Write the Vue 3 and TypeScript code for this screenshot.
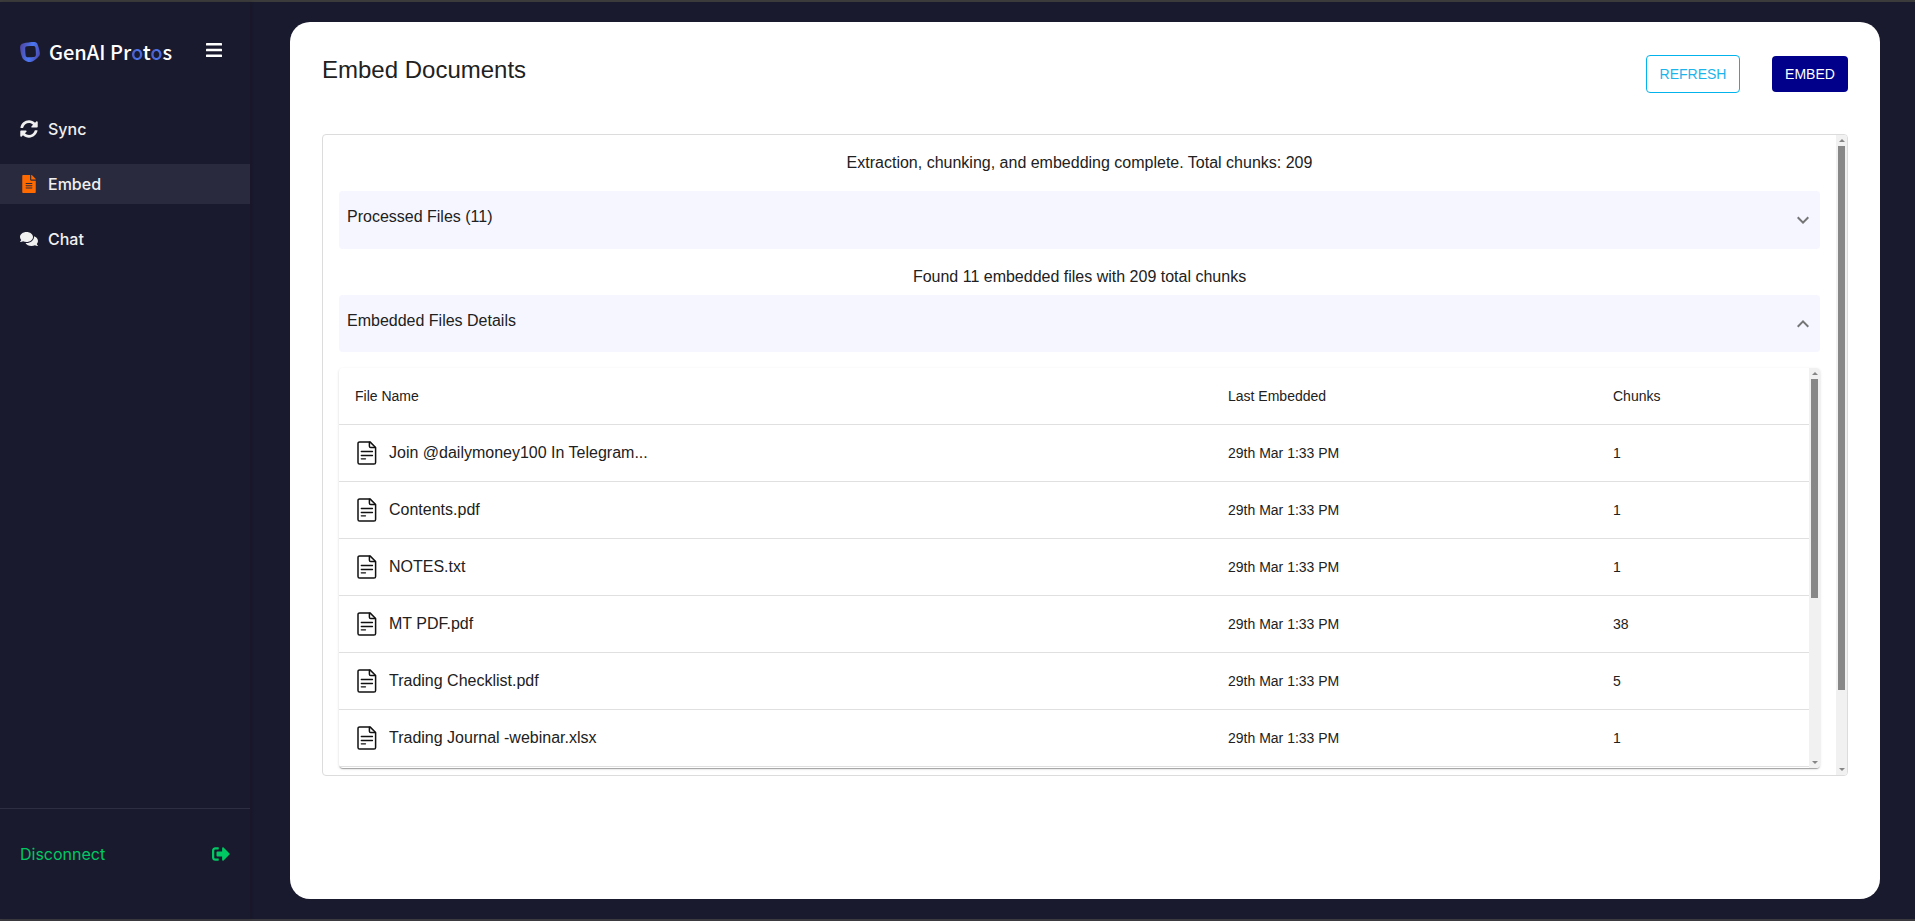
<script setup lang="ts">
import { ref } from 'vue'

interface EmbeddedFile {
  name: string
  embeddedAt: string
  chunks: number
}

const files: EmbeddedFile[] = [
  { name: 'Join @dailymoney100 In Telegram...', embeddedAt: '29th Mar 1:33 PM', chunks: 1 },
  { name: 'Contents.pdf', embeddedAt: '29th Mar 1:33 PM', chunks: 1 },
  { name: 'NOTES.txt', embeddedAt: '29th Mar 1:33 PM', chunks: 1 },
  { name: 'MT PDF.pdf', embeddedAt: '29th Mar 1:33 PM', chunks: 38 },
  { name: 'Trading Checklist.pdf', embeddedAt: '29th Mar 1:33 PM', chunks: 5 },
  { name: 'Trading Journal -webinar.xlsx', embeddedAt: '29th Mar 1:33 PM', chunks: 1 },
]

const detailsOpen = ref(true)
</script>

<template>
  <div class="page">
    <aside class="sidebar">
      <div class="brand">
        <svg class="brand-mark" viewBox="0 0 20 20" aria-hidden="true">
          <defs>
            <linearGradient id="mark" x1="0" y1="0.3" x2="1" y2="0.6">
              <stop offset="0" stop-color="#4f47a6" />
              <stop offset="0.55" stop-color="#4a78f2" />
              <stop offset="1" stop-color="#4d49b0" />
            </linearGradient>
          </defs>
          <path
            fill="url(#mark)"
            fill-rule="evenodd"
            d="M3 1.600C6.800.5 11.300 0 14.600.1c1.500.1 2.400.9 2.900 2.200.9 2.300 1.900 5.200 2.300 8.200.2 1.600-.1 2.900-1.200 4.100-1.600 1.900-3.900 3.700-6.200 4.900-1.700.8-3.600.6-5.400-.1-2.400-.9-4.100-2-4.900-4.100C1 12.500.3 9 .1 6 0 3.600.9 2.200 3 1.600ZM7 4.200C5.700 4.300 5.200 5 5.200 6.400c0 2.500.1 4.600.4 6.900.2 1.400 1 2 2.500 2 2 0 3.900-.1 5.800-.3 1.400-.2 2-1 2-2.400 0-2.300-.1-4.500-.4-6.700-.2-1.300-.9-1.900-2.300-1.900-2.100 0-4.200.1-6.200.2Z"
          />
        </svg>
        <span class="brand-name">GenAI Pr<span class="accent">o</span>t<span class="accent">o</span>s</span>
        <button class="menu" type="button" aria-label="Toggle menu">
          <svg viewBox="0 0 16 14" aria-hidden="true">
            <g fill="#fff">
              <rect width="16" height="2.600" rx="0.600" />
              <rect y="5.700" width="16" height="2.600" rx="0.600" />
              <rect y="11.400" width="16" height="2.600" rx="0.600" />
            </g>
          </svg>
        </button>
      </div>

      <nav class="nav">
        <a class="nav-item" href="#sync">
          <svg viewBox="0 0 512 512" aria-hidden="true">
            <path
              fill="currentColor"
              d="M370.720 133.280C339.458 104.008 298.888 87.962 255.848 88c-77.458.068-144.328 53.178-162.791 126.850-1.344 5.363-6.122 9.150-11.651 9.150H24.103c-7.498 0-13.194-6.807-11.807-14.176C33.933 94.924 134.813 8 256 8c66.448 0 126.791 26.136 171.315 68.685L463.030 40.970C478.149 25.851 504 36.559 504 57.941V192c0 13.255-10.745 24-24 24H345.941c-21.382 0-32.090-25.851-16.971-40.971l41.750-41.749zM32 296h134.059c21.382 0 32.090 25.851 16.971 40.971l-41.750 41.750c31.262 29.273 71.835 45.319 114.876 45.280 77.418-.070 144.315-53.144 162.787-126.849 1.344-5.363 6.122-9.150 11.651-9.150h57.304c7.498 0 13.194 6.807 11.807 14.176C478.067 417.076 377.187 504 256 504c-66.448 0-126.791-26.136-171.315-68.685L48.970 471.030C33.851 486.149 8 475.441 8 454.059V320c0-13.255 10.745-24 24-24z"
            />
          </svg>
          Sync
        </a>
        <a class="nav-item active" href="#embed" aria-current="page">
          <svg viewBox="-64 0 512 512" aria-hidden="true">
            <path
              fill="#ff6a00"
              d="M224 136V0H24C10.700 0 0 10.700 0 24v464c0 13.300 10.700 24 24 24h336c13.300 0 24-10.700 24-24V160H248c-13.200 0-24-10.800-24-24zm64 236c0 6.600-5.400 12-12 12H108c-6.600 0-12-5.400-12-12v-8c0-6.600 5.400-12 12-12h168c6.600 0 12 5.400 12 12v8zm0-64c0 6.600-5.400 12-12 12H108c-6.600 0-12-5.400-12-12v-8c0-6.600 5.400-12 12-12h168c6.600 0 12 5.400 12 12v8zm0-72v8c0 6.600-5.400 12-12 12H108c-6.600 0-12-5.400-12-12v-8c0-6.600 5.400-12 12-12h168c6.600 0 12 5.400 12 12zm96-114.100v6.100H256V0h6.100c6.400 0 12.500 2.500 17 7l97.900 98c4.500 4.500 7 10.600 7 16.900z"
            />
          </svg>
          Embed
        </a>
        <a class="nav-item" href="#chat">
          <svg viewBox="0 0 576 512" aria-hidden="true">
            <path
              fill="currentColor"
              d="M416 192c0-88.400-93.100-160-208-160S0 103.600 0 192c0 34.300 14.100 65.900 38 92-13.400 30.200-35.500 54.200-35.800 54.500-2.200 2.300-2.800 5.700-1.500 8.700S4.800 352 8 352c36.600 0 66.900-12.300 88.700-25 32.200 15.700 70.300 25 111.300 25 114.900 0 208-71.600 208-160zm122 220c23.900-26 38-57.700 38-92 0-66.900-53.500-124.200-129.300-148.100.9 6.600 1.300 13.300 1.300 20.100 0 105.900-107.700 192-240 192-10.800 0-21.300-.8-31.700-1.900C207.800 439.600 281.800 480 368 480c41 0 79.100-9.200 111.300-25 21.800 12.700 52.100 25 88.700 25 3.200 0 6.100-1.900 7.300-4.800 1.300-2.900.7-6.300-1.500-8.700-.3-.3-22.400-24.200-35.800-54.500z"
            />
          </svg>
          Chat
        </a>
      </nav>

      <button class="disconnect" type="button">
        Disconnect
        <svg viewBox="0 0 512 512" aria-hidden="true">
          <path
            fill="currentColor"
            d="M497 273L329 441c-15 15-41 4.500-41-17v-96H152c-13.300 0-24-10.700-24-24v-96c0-13.300 10.700-24 24-24h136V88c0-21.400 25.900-32 41-17l168 168c9.300 9.400 9.300 24.600 0 34zM192 436v-40c0-6.600-5.400-12-12-12H96c-17.700 0-32-14.300-32-32V160c0-17.700 14.300-32 32-32h84c6.600 0 12-5.400 12-12V76c0-6.600-5.400-12-12-12H96c-53 0-96 43-96 96v192c0 53 43 96 96 96h84c6.600 0 12-5.400 12-12z"
          />
        </svg>
      </button>
    </aside>

    <main class="main">
      <section class="card">
        <header class="card-head">
          <h1>Embed Documents</h1>
          <div class="actions">
            <button class="btn outlined" type="button">REFRESH</button>
            <button class="btn filled" type="button">EMBED</button>
          </div>
        </header>

        <div class="panel">
          <div class="panel-body">
            <p class="status">Extraction, chunking, and embedding complete. Total chunks: 209</p>
            <button class="accordion" type="button" aria-expanded="false">
              <span>Processed Files (11)</span>
              <svg viewBox="0 0 24 24" aria-hidden="true">
                <path fill="currentColor" d="M16.590 8.590 12 13.170 7.410 8.590 6 10l6 6 6-6z" />
              </svg>
            </button>
            <p class="status found">Found 11 embedded files with 209 total chunks</p>
            <button
              class="accordion"
              type="button"
              :aria-expanded="detailsOpen"
              @click="detailsOpen = !detailsOpen"
            >
              <span>Embedded Files Details</span>
              <svg :class="{ flipped: detailsOpen }" viewBox="0 0 24 24" aria-hidden="true">
                <path fill="currentColor" d="M16.590 8.590 12 13.170 7.410 8.590 6 10l6 6 6-6z" />
              </svg>
            </button>

            <div v-if="detailsOpen" class="table-box">
              <table class="files">
                <thead>
                  <tr>
                    <th class="col-name" scope="col">File Name</th>
                    <th class="col-date" scope="col">Last Embedded</th>
                    <th class="col-chunks" scope="col">Chunks</th>
                  </tr>
                </thead>
                <tbody>
                  <tr v-for="file in files" :key="file.name">
                    <td>
                      <span class="file">
                        <svg viewBox="0 0 20 24" aria-hidden="true">
                          <g fill="none" stroke="#111" stroke-linejoin="round" stroke-linecap="round">
                            <path
                              stroke-width="1.500"
                              d="M2.600.9H13l5.600 5.600v15a1.600 1.600 0 0 1-1.600 1.600H2.600A1.600 1.600 0 0 1 1 21.500v-19A1.600 1.600 0 0 1 2.600.9z"
                            />
                            <path stroke-width="1.500" d="M12.400 1.200v4a1.400 1.400 0 0 0 1.400 1.400h4.400" />
                            <path stroke-width="1.300" d="M4.300 10.500h11.200M4.300 14.500h11.200M4.300 17.800h4.200" />
                          </g>
                        </svg>
                        {{ file.name }}
                      </span>
                    </td>
                    <td>{{ file.embeddedAt }}</td>
                    <td>{{ file.chunks }}</td>
                  </tr>
                </tbody>
              </table>
              <div class="scrollbar inner" aria-hidden="true">
                <i class="arrow up"></i>
                <span class="track"><i class="thumb"></i></span>
                <i class="arrow down"></i>
              </div>
            </div>
          </div>
          <div class="scrollbar outer" aria-hidden="true">
            <i class="arrow up"></i>
            <span class="track"><i class="thumb"></i></span>
            <i class="arrow down"></i>
          </div>
        </div>
      </section>
    </main>
  </div>
</template>

<style scoped>
.page {
  display: flex;
  box-sizing: border-box;
  min-height: 100vh;
  border-top: 2px solid #3b3b3b;
  border-bottom: 2px solid #3b3b3f;
  background: #1a1a2e;
  color: #212121;
  font-family: "Liberation Sans", Arial, sans-serif;
  font-size: 16px;
  line-height: 24px;
}

button {
  font: inherit;
  cursor: pointer;
}

.sidebar {
  display: flex;
  flex: none;
  flex-direction: column;
  width: 250px;
  box-shadow: 2px 0 2px rgba(0, 0, 0, 0.12);
  font-family: Inter, sans-serif;
}

.brand {
  display: flex;
  align-items: center;
  height: 32px;
  padding: 34px 28px 0 20px;
}

.brand-mark {
  width: 20px;
  height: 20px;
  margin-right: 9px;
}

.brand-name {
  color: #fff;
  font-family: "Noto Sans CJK SC", "Noto Sans", sans-serif;
  font-size: 20px;
  font-weight: 500;
  line-height: 32px;
  white-space: nowrap;
}

.accent {
  background: linear-gradient(100deg, #4f47a6, #4a78f2 60%, #4d49b0);
  background-clip: text;
  color: transparent;
}

.menu {
  display: flex;
  margin-left: auto;
  padding: 0 0 4px;
  border: 0;
  background: none;
}

.menu svg {
  width: 16px;
  height: 14px;
}

.nav {
  display: flex;
  flex-direction: column;
  gap: 15px;
  margin-top: 41px;
}

.nav-item {
  display: flex;
  align-items: center;
  gap: 10px;
  height: 40px;
  padding: 0 20px;
  color: #f0f0f0;
  font-weight: 500;
  text-decoration: none;
}

.nav-item.active {
  background: #2a2a3e;
}

.nav-item svg,
.disconnect svg {
  width: 18px;
  height: 18px;
}

.disconnect {
  display: flex;
  align-items: center;
  justify-content: space-between;
  height: 111px;
  margin-top: auto;
  padding: 0 20px 20px;
  border: 0;
  border-top: 1px solid #2e2e42;
  background: none;
  color: #00c964;
}

.main {
  display: flex;
  flex: 1;
  min-width: 0;
  padding: 20px 35px 20px 40px;
}

.card {
  flex: 1;
  min-width: 0;
  padding: 32px;
  border-radius: 20px;
  background: #fff;
}

.card-head {
  display: flex;
  align-items: flex-start;
  justify-content: space-between;
  height: 40px;
}

h1 {
  margin: 0;
  font-size: 24px;
  font-weight: 400;
  line-height: 32px;
}

.actions {
  display: flex;
  align-items: center;
  gap: 32px;
  height: 40px;
}

.btn {
  padding: 6px 12px;
  border: 0;
  border-radius: 4px;
  font-size: 14px;
}

.btn.outlined {
  min-width: 94px;
  border: 1px solid #03b3ec;
  background: #fff;
  color: #1cb4ea;
}

.btn.filled {
  min-width: 76px;
  background: #00008b;
  color: #fff;
}

.panel {
  display: flex;
  margin-top: 40px;
  overflow: hidden;
  border: 1px solid #dcdcdc;
  border-radius: 4px;
}

.panel-body {
  flex: 1;
  min-width: 0;
  padding: 16px 16px 7px;
}

.status {
  margin: 0 0 16px;
  text-align: center;
}

.status.found {
  margin: 16px 0 6px;
}

.accordion {
  display: flex;
  align-items: center;
  justify-content: space-between;
  width: 100%;
  height: 57px;
  padding: 0 5px 0 8px;
  border: 0;
  border-radius: 4px;
  background: #f5f6ff;
  color: inherit;
  text-align: left;
}

.accordion[aria-expanded="false"] {
  height: 58px;
}

.accordion span {
  padding-bottom: 6px;
}

.accordion svg {
  width: 24px;
  height: 24px;
  color: #757575;
}

.flipped {
  transform: rotate(180deg);
}

.table-box {
  display: flex;
  min-height: 400px;
  margin-top: 16px;
  overflow: hidden;
  border-radius: 4px;
  box-shadow:
    0 2px 1px -1px rgba(0, 0, 0, 0.2),
    0 1px 1px rgba(0, 0, 0, 0.14),
    0 1px 3px rgba(0, 0, 0, 0.12);
}

.files {
  flex: 1;
  align-self: flex-start;
  border-spacing: 0;
  table-layout: fixed;
  font-size: 14px;
}

.files th,
.files td {
  height: 56px;
  padding: 0 16px;
  border-bottom: 1px solid #e0e0e0;
  font-weight: 400;
  text-align: left;
}

.col-date {
  width: 353px;
}

.col-chunks {
  width: 180px;
}

.file {
  display: flex;
  align-items: center;
  gap: 12px;
  font-size: 16px;
}

.file svg {
  width: 20px;
  height: 24px;
  margin-left: 2px;
}

.scrollbar {
  display: flex;
  flex: none;
  flex-direction: column;
  align-items: center;
  width: 11px;
  background: #f1f1f1;
}

.arrow {
  box-sizing: border-box;
  height: 3px;
  margin: 4px 0;
  border: 3px solid transparent;
}

.arrow.up {
  border-top: 0;
  border-bottom-color: #868686;
}

.arrow.down {
  border-bottom: 0;
  border-top-color: #868686;
}

.track {
  flex: 1;
  width: 7px;
}

.thumb {
  display: block;
  background: #888;
}

.inner .thumb {
  height: 58%;
}

.outer .thumb {
  height: 88%;
}
</style>

<style>
body {
  margin: 0;
}
</style>
